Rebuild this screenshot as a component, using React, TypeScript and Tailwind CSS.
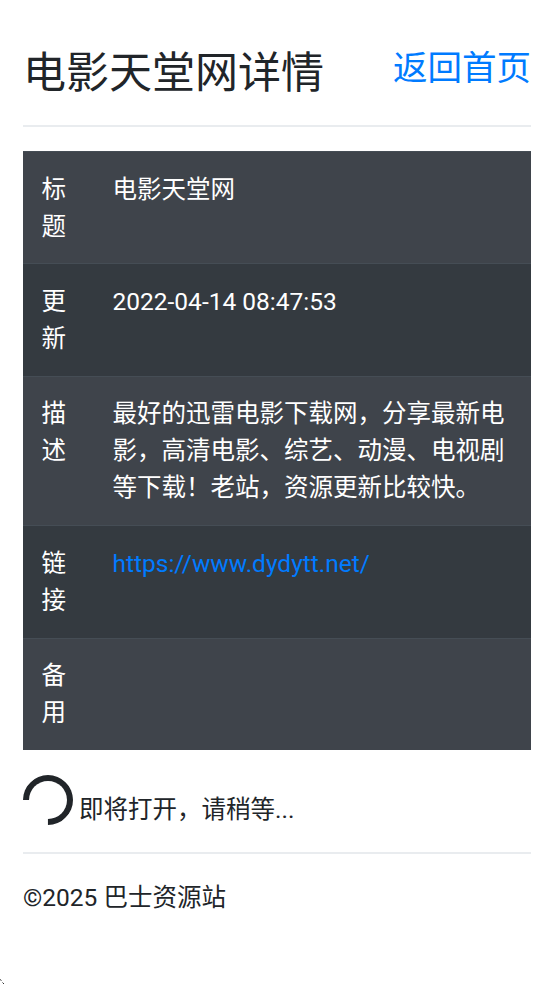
const rows = [
  { label: "标题", value: "电影天堂网" },
  { label: "更新", value: "2022-04-14 08:47:53" },
  { label: "描述", value: "最好的迅雷电影下载网，分享最新电影，高清电影、综艺、动漫、电视剧等下载！老站，资源更新比较快。" },
  { label: "链接", value: "https://www.dydytt.net/", link: true },
  { label: "备用", value: "" },
]

export default function App() {
  return (
    <div className="relative h-[985px] overflow-hidden bg-white px-[23px] text-[24.5px] leading-[37px] text-[#212529] font-['Roboto','Noto_Sans_CJK_SC',sans-serif]">
      <div className="flex items-start justify-between pt-[41px] pb-[20px] border-b-2 border-[#e9ecef]">
        <h1 className="text-[43px] leading-[64px] font-normal">电影天堂网详情</h1>
        <a className="text-[34.5px] leading-[54px] text-[#007bff]">返回首页</a>
      </div>
      <table className="w-full mt-[24px] bg-[#343a40] text-white border-collapse">
        <tbody>
          {rows.map((r, i) => (
            <tr key={r.label} className={i % 2 === 0 ? "bg-[#3f444b]" : ""}>
              <th className="w-[72px] pl-[18.5px] pr-[29px] py-[18.7px] font-normal border-t border-[#454d55] text-left align-top">{r.label}</th>
              <td className="pl-[17.5px] pr-[18.5px] py-[18.7px] border-t border-[#454d55] align-top">
                {r.link ? <a className="text-[#007bff]">{r.value}</a> : r.value}
              </td>
            </tr>
          ))}
        </tbody>
      </table>
      <div className="flex items-end mt-[25px]">
        <div className="w-[50px] h-[50px] rounded-full border-[6px] border-[#212529] border-r-transparent rotate-[135deg]"></div>
        <span className="ml-[6px] -mb-[3px]">即将打开，请稍等...</span>
      </div>
      <div className="mt-[27px] border-t-2 border-[#e9ecef] pt-[25px]">©2025 巴士资源站</div>
      <svg className="absolute left-0 bottom-0" width="6" height="6" viewBox="0 0 6 6">
        <path d="M0 0.5 L1.5 1.5 M2.5 3.5 L4 5" stroke="#333" strokeWidth="1" fill="none" />
      </svg>
    </div>
  )
}
